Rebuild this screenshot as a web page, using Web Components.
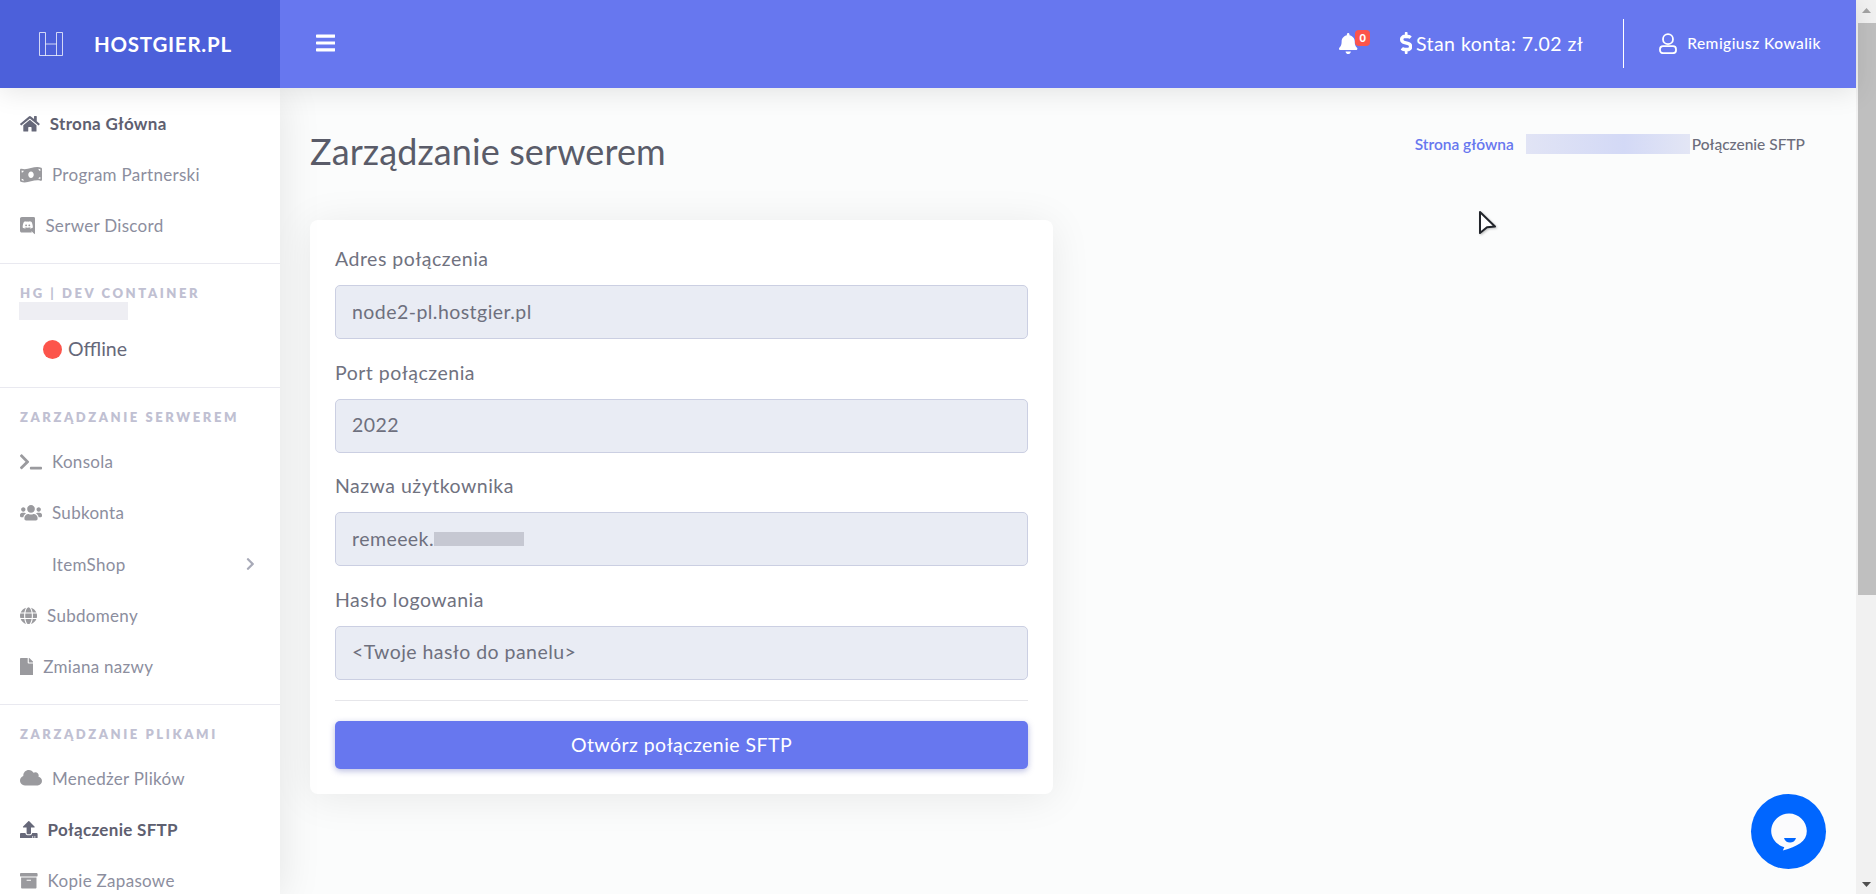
<!DOCTYPE html>
<html lang="pl">
<head>
<meta charset="utf-8">
<title>Zarządzanie serwerem</title>
<style>
    html, body { margin: 0; height: 100%; overflow: hidden; }
    body { font-family: Lato, "Noto Sans", sans-serif; color: #6c6e7c; background: #fbfcfc; }
</style>
</head>
<body>
<hg-app>
    <hg-topbar slot="top"></hg-topbar>
    <hg-sidebar slot="side">
        <hg-nav-item icon="home" active>Strona Główna</hg-nav-item>
        <hg-nav-item icon="bill">Program Partnerski</hg-nav-item>
        <hg-nav-item icon="discord">Serwer Discord</hg-nav-item>
        <hg-nav-rule></hg-nav-rule>
        <hg-nav-title>HG | DEV CONTAINER</hg-nav-title>
        <hg-server-status></hg-server-status>
        <hg-nav-rule></hg-nav-rule>
        <hg-nav-title>ZARZĄDZANIE SERWEREM</hg-nav-title>
        <hg-nav-item icon="terminal">Konsola</hg-nav-item>
        <hg-nav-item icon="users">Subkonta</hg-nav-item>
        <hg-nav-item icon="blank" chevron>ItemShop</hg-nav-item>
        <hg-nav-item icon="globe">Subdomeny</hg-nav-item>
        <hg-nav-item icon="file">Zmiana nazwy</hg-nav-item>
        <hg-nav-rule></hg-nav-rule>
        <hg-nav-title>ZARZĄDZANIE PLIKAMI</hg-nav-title>
        <hg-nav-item icon="cloud">Menedżer Plików</hg-nav-item>
        <hg-nav-item icon="upload" active>Połączenie SFTP</hg-nav-item>
        <hg-nav-item icon="archive">Kopie Zapasowe</hg-nav-item>
    </hg-sidebar>
    <hg-page-head></hg-page-head>
    <hg-card>
        <hg-field label="Adres połączenia">node2-pl.hostgier.pl</hg-field>
        <hg-field label="Port połączenia">2022</hg-field>
        <hg-field label="Nazwa użytkownika">remeeek.<hg-redact style="--w:90px;--h:14px;--c:#c6c8d2;--va:0"></hg-redact></hg-field>
        <hg-field label="Hasło logowania">&lt;Twoje hasło do panelu&gt;</hg-field>
        <hg-button>Otwórz połączenie SFTP</hg-button>
    </hg-card>
    <hg-scrollbar slot="bar"></hg-scrollbar>
</hg-app>
<hg-cursor></hg-cursor>
<hg-chat></hg-chat>

<script>
const ICONS = {
    bars: ['0 0 448 512', 'M16 132h416c8.837 0 16-7.163 16-16V76c0-8.837-7.163-16-16-16H16C7.163 60 0 67.163 0 76v40c0 8.837 7.163 16 16 16zm0 160h416c8.837 0 16-7.163 16-16v-40c0-8.837-7.163-16-16-16H16c-8.837 0-16 7.163-16 16v40c0 8.837 7.163 16 16 16zm0 160h416c8.837 0 16-7.163 16-16v-40c0-8.837-7.163-16-16-16H16c-8.837 0-16 7.163-16 16v40c0 8.837 7.163 16 16 16z'],
    bell: ['0 0 448 512', 'M224 512c35.32 0 63.97-28.65 63.97-64H160.03c0 35.35 28.65 64 63.97 64zm215.39-149.71c-19.32-20.76-55.47-51.99-55.47-154.29 0-77.7-54.48-139.9-127.94-155.16V32c0-17.67-14.32-32-31.98-32s-31.98 14.33-31.98 32v20.84C118.56 68.1 64.08 130.3 64.08 208c0 102.3-36.15 133.53-55.47 154.29-6 6.45-8.66 14.16-8.61 21.71.11 16.4 12.98 32 32.1 32h383.8c19.12 0 32-15.6 32.1-32 .05-7.55-2.61-15.27-8.61-21.71z'],
    dollar: ['0 0 288 512', 'M209.2 233.4l-108-31.6C88.7 198.2 80 186.5 80 173.5c0-16.3 13.2-29.5 29.5-29.5h66.3c12.2 0 24.2 3.7 34.2 10.5 6.1 4.1 14.3 3.1 19.5-2l34.8-34c7.1-6.9 6.1-18.4-1.8-24.5C238 74.8 207.4 64.1 176 64V16c0-8.8-7.2-16-16-16h-32c-8.8 0-16 7.2-16 16v48h-2.5C45.8 64-5.4 118.7.5 183.6c4.2 46.1 39.4 83.6 83.8 96.6l102.5 30c12.5 3.7 21.2 15.3 21.2 28.3 0 16.3-13.2 29.5-29.5 29.5h-66.3C100 368 88 364.3 78 357.5c-6.1-4.1-14.3-3.1-19.5 2l-34.8 34c-7.1 6.9-6.1 18.4 1.8 24.5 24.5 19.2 55.1 29.9 86.5 30v48c0 8.8 7.2 16 16 16h32c8.8 0 16-7.2 16-16v-48.2c46.6-.9 90.3-28.6 105.7-72.7 21.5-61.6-14.6-124.8-72.5-141.7z'],
    chevron: ['0 0 320 512', 'M285.476 272.971L91.132 467.314c-9.373 9.373-24.569 9.373-33.941 0l-22.667-22.667c-9.357-9.357-9.375-24.522-.04-33.901L188.505 256 34.484 101.255c-9.335-9.379-9.317-24.544.04-33.901l22.667-22.667c9.373-9.373 24.569-9.373 33.941 0L285.475 239.03c9.373 9.372 9.373 24.568.001 33.941z'],
    home: ['0 0 576 512', 'M280.37 148.26L96 300.11V464a16 16 0 0 0 16 16l112.06-.29a16 16 0 0 0 15.92-16V368a16 16 0 0 1 16-16h64a16 16 0 0 1 16 16v95.64a16 16 0 0 0 16 16.05L464 480a16 16 0 0 0 16-16V300L295.67 148.26a12.19 12.19 0 0 0-15.3 0zM571.6 251.47L488 182.56V44.05a12 12 0 0 0-12-12h-56a12 12 0 0 0-12 12v72.61L318.47 43a48 48 0 0 0-61 0L4.34 251.47a12 12 0 0 0-1.6 16.9l25.5 31A12 12 0 0 0 45.15 301l235.22-193.74a12.19 12.19 0 0 1 15.3 0L530.9 301a12 12 0 0 0 16.9-1.6l25.5-31a12 12 0 0 0-1.7-16.93z'],
    bill: ['0 0 640 512', 'M621.16 54.46C582.37 38.19 543.55 32 504.75 32c-123.17-.01-246.33 62.34-369.5 62.34-30.89 0-61.76-3.92-92.65-13.72-3.47-1.1-6.95-1.62-10.35-1.62C15.04 79 0 92.32 0 110.81v317.26c0 12.63 7.23 24.6 18.84 29.46C57.63 473.81 96.45 480 135.25 480c123.17 0 246.34-62.35 369.51-62.35 30.89 0 61.76 3.92 92.65 13.72 3.47 1.1 6.95 1.62 10.35 1.62 17.21 0 32.25-13.32 32.25-31.81V83.93c-.01-12.64-7.24-24.6-18.85-29.47zM48 132.22c20.12 5.04 41.12 7.57 62.72 8.93C104.84 170.54 79 192.69 48 192.69v-60.47zm0 285v-47.78c34.37 0 62.18 27.27 63.71 61.4-22.53-1.81-43.59-6.31-63.71-13.62zM320 352c-44.19 0-80-42.99-80-96 0-53.02 35.82-96 80-96s80 42.98 80 96c0 53.03-35.83 96-80 96zm272 27.78c-17.52-4.39-35.71-6.85-54.32-8.44 5.87-26.08 27.5-45.88 54.32-49.28v57.72zm0-236.11c-30.89-3.91-54.86-29.7-55.81-61.55 19.54 2.17 38.09 6.23 55.81 12.66v48.89z'],
    discord: ['0 0 448 512', 'M297.216 243.2c0 15.616-11.52 28.416-26.112 28.416-14.336 0-26.112-12.8-26.112-28.416s11.52-28.416 26.112-28.416c14.592 0 26.112 12.8 26.112 28.416zm-119.552-28.416c-14.592 0-26.112 12.8-26.112 28.416s11.776 28.416 26.112 28.416c14.592 0 26.112-12.8 26.112-28.416.256-15.616-11.52-28.416-26.112-28.416zM448 52.736V512c-64.494-56.994-43.868-38.128-118.784-107.776l13.568 47.36H52.48C23.552 451.584 0 428.032 0 398.848V52.736C0 23.552 23.552 0 52.48 0h343.04C424.448 0 448 23.552 448 52.736zm-72.96 242.688c0-82.432-36.864-149.248-36.864-149.248-36.864-27.648-71.936-26.88-71.936-26.88l-3.584 4.096c43.52 13.312 63.744 32.512 63.744 32.512-60.811-33.329-132.244-33.335-191.232-7.424-9.472 4.352-15.104 7.424-15.104 7.424s21.248-20.224 67.328-33.536l-2.56-3.072s-35.072-.768-71.936 26.88c0 0-36.864 66.816-36.864 149.248 0 0 21.504 37.12 78.08 38.912 0 0 9.472-11.52 17.152-21.248-32.512-9.728-44.8-30.208-44.8-30.208 3.766 2.636 9.976 6.053 10.496 6.4 43.21 24.198 104.588 32.126 159.744 8.96 8.96-3.328 18.944-8.192 29.44-15.104 0 0-12.8 20.992-46.336 30.464 7.68 9.728 16.896 20.736 16.896 20.736 56.576-1.792 78.336-38.912 78.336-38.912z'],
    terminal: ['0 0 640 512', 'M257.981 272.971L63.638 467.314c-9.373 9.373-24.569 9.373-33.941 0L7.029 444.647c-9.357-9.357-9.375-24.522-.04-33.901L161.011 256 6.99 101.255c-9.335-9.379-9.317-24.544.04-33.901l22.667-22.667c9.373-9.373 24.569-9.373 33.941 0l194.343 194.343c9.373 9.372 9.373 24.568 0 33.941zM640 456v-32c0-13.255-10.745-24-24-24H312c-13.255 0-24 10.745-24 24v32c0 13.255 10.745 24 24 24h304c13.255 0 24-10.745 24-24z'],
    users: ['0 0 640 512', 'M96 224c35.3 0 64-28.7 64-64s-28.7-64-64-64-64 28.7-64 64 28.7 64 64 64zm448 0c35.3 0 64-28.7 64-64s-28.7-64-64-64-64 28.7-64 64 28.7 64 64 64zm32 32h-64c-17.6 0-33.5 7.1-45.1 18.6 40.3 22.1 68.9 62 75.1 109.4h66c17.7 0 32-14.3 32-32v-32c0-35.3-28.7-64-64-64zm-256 0c61.9 0 112-50.1 112-112S381.9 32 320 32 208 82.1 208 144s50.1 112 112 112zm76.8 32h-8.3c-20.8 10-43.9 16-68.5 16s-47.6-6-68.5-16h-8.3C179.6 288 128 339.6 128 403.2V432c0 26.5 21.5 48 48 48h288c26.5 0 48-21.5 48-48v-28.8c0-63.6-51.6-115.2-115.2-115.2zm-223.7-13.4C161.5 263.1 145.6 256 128 256H64c-35.3 0-64 28.7-64 64v32c0 17.7 14.3 32 32 32h65.9c6.3-47.4 34.9-87.3 75.2-109.4z'],
    blank: ['0 0 640 512', ''],
    globe: ['0 0 496 512', 'M336.5 160C322 70.7 287.8 8 248 8s-74 62.7-88.5 152h177zM152 256c0 22.2 1.2 43.5 3.3 64h185.3c2.1-20.5 3.3-41.8 3.3-64s-1.2-43.5-3.3-64H155.3c-2.1 20.5-3.3 41.8-3.3 64zm324.7-96c-28.6-67.9-86.5-120.4-158-141.6 24.4 33.8 41.2 84.7 50 141.6h108zM177.2 18.4C105.8 39.6 47.8 92.1 19.3 160h108c8.7-56.9 25.5-107.8 49.9-141.6zM487.4 192H372.7c2.1 21 3.3 42.5 3.3 64s-1.2 43-3.3 64h114.6c5.5-20.5 8.6-41.8 8.6-64s-3.1-43.5-8.5-64zM120 256c0-21.5 1.2-43 3.3-64H8.6C3.2 212.5 0 233.8 0 256s3.2 43.5 8.6 64h114.6c-2-21-3.2-42.5-3.2-64zm39.5 96c14.5 89.3 48.7 152 88.5 152s74-62.7 88.5-152h-177zm159.3 141.6c71.4-21.2 129.4-73.7 158-141.6h-108c-8.8 56.9-25.6 107.8-50 141.6zM19.3 352c28.6 67.9 86.5 120.4 158 141.6-24.4-33.8-41.2-84.7-50-141.6h-108z'],
    file: ['0 0 384 512', 'M224 136V0H24C10.7 0 0 10.7 0 24v464c0 13.3 10.7 24 24 24h336c13.3 0 24-10.7 24-24V160H248c-13.2 0-24-10.8-24-24zm160-14.1v6.1H256V0h6.1c6.4 0 12.5 2.5 17 7l97.9 98c4.5 4.5 7 10.6 7 16.9z'],
    cloud: ['0 0 640 512', 'M537.6 226.6c4.1-10.7 6.4-22.4 6.4-34.6 0-53-43-96-96-96-19.7 0-38.1 6-53.3 16.2C367 64.2 315.3 32 256 32c-88.4 0-160 71.6-160 160 0 2.7.1 5.4.2 8.1C40.2 219.8 0 273.2 0 336c0 79.5 64.5 144 144 144h368c70.7 0 128-57.3 128-128 0-61.9-44-113.6-102.4-125.4z'],
    upload: ['0 0 512 512', 'M296 384h-80c-13.3 0-24-10.7-24-24V192h-87.7c-17.8 0-26.7-21.5-14.1-34.1L242.3 5.7c7.5-7.5 19.8-7.5 27.3 0l152.2 152.2c12.6 12.6 3.7 34.1-14.1 34.1H320v168c0 13.3-10.7 24-24 24zm216-8v112c0 13.3-10.7 24-24 24H24c-13.3 0-24-10.7-24-24V376c0-13.3 10.7-24 24-24h136v8c0 30.9 25.1 56 56 56h80c30.9 0 56-25.1 56-56v-8h136c13.3 0 24 10.7 24 24zm-124 88c0-11-9-20-20-20s-20 9-20 20 9 20 20 20 20-9 20-20zm64 0c0-11-9-20-20-20s-20 9-20 20 9 20 20 20 20-9 20-20z'],
    archive: ['0 0 512 512', 'M32 448c0 17.7 14.3 32 32 32h384c17.7 0 32-14.3 32-32V160H32v288zm160-212c0-6.6 5.4-12 12-12h104c6.6 0 12 5.4 12 12v8c0 6.6-5.4 12-12 12H204c-6.6 0-12-5.4-12-12v-8zM480 32H32C14.3 32 0 46.3 0 64v48c0 8.8 7.2 16 16 16h480c8.8 0 16-7.2 16-16V64c0-17.7-14.3-32-32-32z']
};

class HgIcon extends HTMLElement {
    connectedCallback() {
        const [box, d] = ICONS[this.getAttribute('name')];
        const [, , w, h] = box.split(' ').map(Number);
        const size = parseFloat(this.getAttribute('size') || 17.6);
        this.attachShadow({ mode: 'open' }).innerHTML = `
            <style>:host { display: inline-flex; flex: none; } svg { display: block; fill: currentColor; }</style>
            <svg viewBox="${box}" width="${size * w / h}" height="${size}"><path d="${d}"/></svg>`;
    }
}
customElements.define('hg-icon', HgIcon);

class HgApp extends HTMLElement {
    constructor() {
        super();
        this.attachShadow({ mode: 'open' }).innerHTML = `
            <style>
                :host { display: grid; grid-template-columns: 1fr 20px; height: 894px; overflow: hidden; }
                .main { display: grid; grid-template-columns: 280px 1fr; grid-template-rows: 88px 1fr; min-height: 0; }
                .top { grid-column: 1 / 3; position: relative; z-index: 2; }
                .side { position: relative; z-index: 1; min-height: 0; overflow: hidden; box-shadow: 0 4px 40px rgba(0,0,0,.1); background: #fff; }
                .content { padding: 0 30px; min-width: 0; background: #fbfcfc; }
            </style>
            <div class="main">
                <div class="top"><slot name="top"></slot></div>
                <div class="side"><slot name="side"></slot></div>
                <div class="content"><slot></slot></div>
            </div>
            <slot name="bar"></slot>`;
    }
}
customElements.define('hg-app', HgApp);

class HgTopbar extends HTMLElement {
    constructor() {
        super();
        this.attachShadow({ mode: 'open' }).innerHTML = `
            <style>
                :host { display: flex; height: 88px; background: #6777ef; color: #fff; box-shadow: 0 4px 25px rgba(0,0,0,.1); }
                .brand { width: 280px; flex: none; display: flex; align-items: center; gap: 31px; padding-left: 39px; box-sizing: border-box; background: #4c60da; font-size: 20.5px; font-weight: 700; letter-spacing: .75px; }
                .logo { display: block; }
                .bars { margin: 0 0 2px 36px; align-self: center; display: flex; }
                .right { margin-left: auto; display: flex; align-items: center; padding-bottom: 2px; }
                .bell { position: relative; display: flex; margin-right: 42px; }
                .badge { position: absolute; left: 16px; top: -3px; width: 15px; height: 16px; border-radius: 4px; background: #fc544b; font-size: 11px; font-weight: 900; line-height: 16px; text-align: center; }
                .money { display: flex; align-items: center; gap: 4px; font-size: 19.5px; letter-spacing: .45px; }
                .sep { width: 1px; height: 49px; background: #fff; margin: 0 35px 0 40px; }
                .user { display: flex; align-items: center; gap: 10px; font-size: 15.5px; font-weight: 500; letter-spacing: .45px; margin-right: 35px; }
            </style>
            <div class="brand">
                <svg class="logo" width="24" height="24" viewBox="0 0 24 24" fill="none" stroke="#fff" stroke-opacity=".75" stroke-width="1">
                    <path d="M6.500 .5H.5v23h23V.5H17.500M6.500 .5v23M17.500 .5v23M6.500 12h11"/>
                </svg>
                <span>HOSTGIER.PL</span>
            </div>
            <hg-icon class="bars" name="bars" size="22"></hg-icon>
            <div class="right">
                <div class="bell"><hg-icon name="bell" size="21"></hg-icon><span class="badge">0</span></div>
                <div class="money"><hg-icon name="dollar" size="22"></hg-icon><span>Stan konta: 7.02 zł</span></div>
                <div class="sep"></div>
                <div class="user">
                    <svg width="18" height="21" viewBox="0 0 18 21" fill="none" stroke="#fff" stroke-width="1.8"><circle cx="9" cy="6.200" r="5"/><path d="M4 13.200h10a3 3 0 0 1 3 3v1a3 3 0 0 1-3 3H4a3 3 0 0 1-3-3v-1a3 3 0 0 1 3-3z"/></svg>
                    <span>Remigiusz Kowalik</span>
                </div>
            </div>`;
    }
}
customElements.define('hg-topbar', HgTopbar);

class HgSidebar extends HTMLElement {
    constructor() {
        super();
        this.attachShadow({ mode: 'open' }).innerHTML = `
            <style>:host { display: block; padding-top: 10px; background: #fff; }</style>
            <slot></slot>`;
    }
}
customElements.define('hg-sidebar', HgSidebar);

class HgNavItem extends HTMLElement {
    connectedCallback() {
        const active = this.hasAttribute('active');
        const chevron = this.hasAttribute('chevron')
            ? '<hg-icon class="chev" name="chevron" size="14"></hg-icon>' : '';
        this.attachShadow({ mode: 'open' }).innerHTML = `
            <style>
                :host { display: flex; align-items: center; gap: 10px; height: 51.2px; padding: 0 25px 0 20px; font-size: 17px; letter-spacing: .3px; color: ${active ? '#5e6070' : '#8c8e9e'}; font-weight: ${active ? 700 : 400}; }
                hg-icon { color: ${active ? '#666879' : '#9a9a9e'}; }
                .chev { margin-left: auto; color: #a8aab8; }
            </style>
            <hg-icon name="${this.getAttribute('icon')}"></hg-icon>
            <span><slot></slot></span>
            ${chevron}`;
    }
}
customElements.define('hg-nav-item', HgNavItem);

class HgNavRule extends HTMLElement {
    constructor() {
        super();
        this.attachShadow({ mode: 'open' }).innerHTML = `
            <style>:host { display: block; height: 1px; background: #e9e9f0; margin-top: 11.6px; }</style>`;
    }
}
customElements.define('hg-nav-rule', HgNavRule);

class HgNavTitle extends HTMLElement {
    constructor() {
        super();
        this.attachShadow({ mode: 'open' }).innerHTML = `
            <style>
                :host { display: block; padding: 20px 20px 10px; font-size: 13px; line-height: 18px; font-weight: 800; letter-spacing: 2.6px; color: #c0c0d2; white-space: nowrap; }
            </style>
            <slot></slot>`;
    }
}
customElements.define('hg-nav-title', HgNavTitle);

class HgRedact extends HTMLElement {
    constructor() {
        super();
        this.attachShadow({ mode: 'open' }).innerHTML = `
            <style>
                :host { display: inline-block; width: var(--w); height: var(--h); background: var(--c); vertical-align: var(--va, -1px); }
            </style>`;
    }
}
customElements.define('hg-redact', HgRedact);

class HgServerStatus extends HTMLElement {
    constructor() {
        super();
        this.attachShadow({ mode: 'open' }).innerHTML = `
            <style>
                :host { display: block; margin-top: -10px; height: 73.4px; }
                .bar { display: block; margin-left: 19px; }
                .row { display: flex; align-items: center; gap: 6px; padding: 17px 0 0 43px; font-size: 19.5px; line-height: 24px; color: #666879; }
                .dot { width: 19px; height: 19px; border-radius: 50%; background: #fc544b; }
            </style>
            <hg-redact class="bar" style="--w:109px;--h:18px;--c:#eeeef3"></hg-redact>
            <div class="row"><span class="dot"></span><span>Offline</span></div>`;
    }
}
customElements.define('hg-server-status', HgServerStatus);

class HgPageHead extends HTMLElement {
    constructor() {
        super();
        this.attachShadow({ mode: 'open' }).innerHTML = `
            <style>
                :host { display: flex; justify-content: space-between; align-items: flex-start; height: 132px; }
                h1 { margin: 41px 0 0; font-size: 36px; line-height: 44px; font-weight: 400; letter-spacing: .1px; color: #5a5c69; }
                nav { display: flex; align-items: center; margin: 45px 21px 0 0; font-size: 15.5px; line-height: 22px; }
                a { color: #6777ef; font-weight: 600; margin-right: 12px; }
                span { color: #6c6e7c; font-weight: 500; margin-left: 2px; }
            </style>
            <h1>Zarządzanie serwerem</h1>
            <nav>
                <a>Strona główna</a>
                <hg-redact style="--w:164px;--h:20px;--c:linear-gradient(90deg,#e1e4f5,#d3d9f6 60%,#e3e6f5)"></hg-redact>
                <span>Połączenie SFTP</span>
            </nav>`;
    }
}
customElements.define('hg-page-head', HgPageHead);

class HgCard extends HTMLElement {
    constructor() {
        super();
        this.attachShadow({ mode: 'open' }).innerHTML = `
            <style>
                :host { display: block; width: 743px; box-sizing: border-box; padding: 25px; background: #fff; border-radius: 8px; box-shadow: 0 4px 40px rgba(0,0,0,.08); }
            </style>
            <slot></slot>`;
    }
}
customElements.define('hg-card', HgCard);

class HgField extends HTMLElement {
    connectedCallback() {
        this.attachShadow({ mode: 'open' }).innerHTML = `
            <style>
                :host { display: block; margin-bottom: 19.670px; }
                label { display: block; height: 27px; margin-bottom: 13px; font-size: 19.5px; line-height: 27px; letter-spacing: .5px; color: #70727f; }
                .input { height: 54px; box-sizing: border-box; display: flex; align-items: center; padding: 0 16px 2px; border: 1px solid #cbcfe2; border-radius: 5px; background: #e9ecf4; font-size: 19.5px; letter-spacing: .45px; color: #6e707e; }
            </style>
            <label>${this.getAttribute('label')}</label>
            <div class="input"><span><slot></slot></span></div>`;
    }
}
customElements.define('hg-field', HgField);

class HgButton extends HTMLElement {
    constructor() {
        super();
        this.attachShadow({ mode: 'open' }).innerHTML = `
            <style>
                :host { display: flex; align-items: center; justify-content: center; height: 48px; margin-top: 41px; position: relative; background: #6777ef; color: #fff; border-radius: 5px; font-size: 19.5px; letter-spacing: .45px; box-shadow: 0 2px 6px rgba(80,90,180,.4); }
                :host::before { content: ''; position: absolute; left: 0; right: 0; top: -21px; height: 1px; background: #e6e6ea; }
            </style>
            <slot></slot>`;
    }
}
customElements.define('hg-button', HgButton);

class HgScrollbar extends HTMLElement {
    constructor() {
        super();
        this.attachShadow({ mode: 'open' }).innerHTML = `
            <style>
                :host { display: flex; flex-direction: column; height: 894px; background: #f1f1f1; }
                .arrow { height: 20px; display: flex; align-items: center; justify-content: center; flex: none; }
                .thumb { height: 572px; background: #bfbfbf; flex: none; margin: 3px 0 0 2px; }
                .rest { flex: 1; }
            </style>
            <div class="arrow"><svg width="9" height="5" viewBox="0 0 9 5"><path d="M4.5 0L9 5H0z" fill="#a3a3a3"/></svg></div>
            <div class="thumb"></div>
            <div class="rest"></div>
            <div class="arrow"><svg width="9" height="5" viewBox="0 0 9 5"><path d="M0 0h9L4.5 5z" fill="#505050"/></svg></div>`;
    }
}
customElements.define('hg-scrollbar', HgScrollbar);

class HgCursor extends HTMLElement {
    constructor() {
        super();
        this.attachShadow({ mode: 'open' }).innerHTML = `
            <style>:host { position: absolute; left: 1478px; top: 210px; width: 20px; height: 25px; } svg { display: block; filter: drop-shadow(1px 1px 1px rgba(0,0,0,.25)); }</style>
            <svg width="20" height="25" viewBox="0 0 20 25"><path d="M2 2l15 14.500-8 .8L2 23z" fill="#fff" stroke="#22252b" stroke-width="2" stroke-linejoin="round"/></svg>`;
    }
}
customElements.define('hg-cursor', HgCursor);

class HgChat extends HTMLElement {
    constructor() {
        super();
        this.attachShadow({ mode: 'open' }).innerHTML = `
            <style>:host { position: absolute; left: 1751px; top: 794px; width: 75px; height: 75px; border-radius: 50%; background: #0066ff; } svg { display: block; }</style>
            <svg width="75" height="75" viewBox="0 0 75 75">
                <path d="M38 19.500c9.800 0 17.800 7.900 17.800 17.600 0 10.500-9.500 15.500-24 19.500l1.500-3.300C25.500 51 20.200 44.500 20.200 37.100 20.200 27.400 28.200 19.500 38 19.500z" fill="#fbfbfd"/>
                <path d="M33 44h12c-.8 3-3.200 4.500-6 4.500S33.800 47 33 44z" fill="#0066ff"/>
            </svg>`;
    }
}
customElements.define('hg-chat', HgChat);
</script>
</body>
</html>
